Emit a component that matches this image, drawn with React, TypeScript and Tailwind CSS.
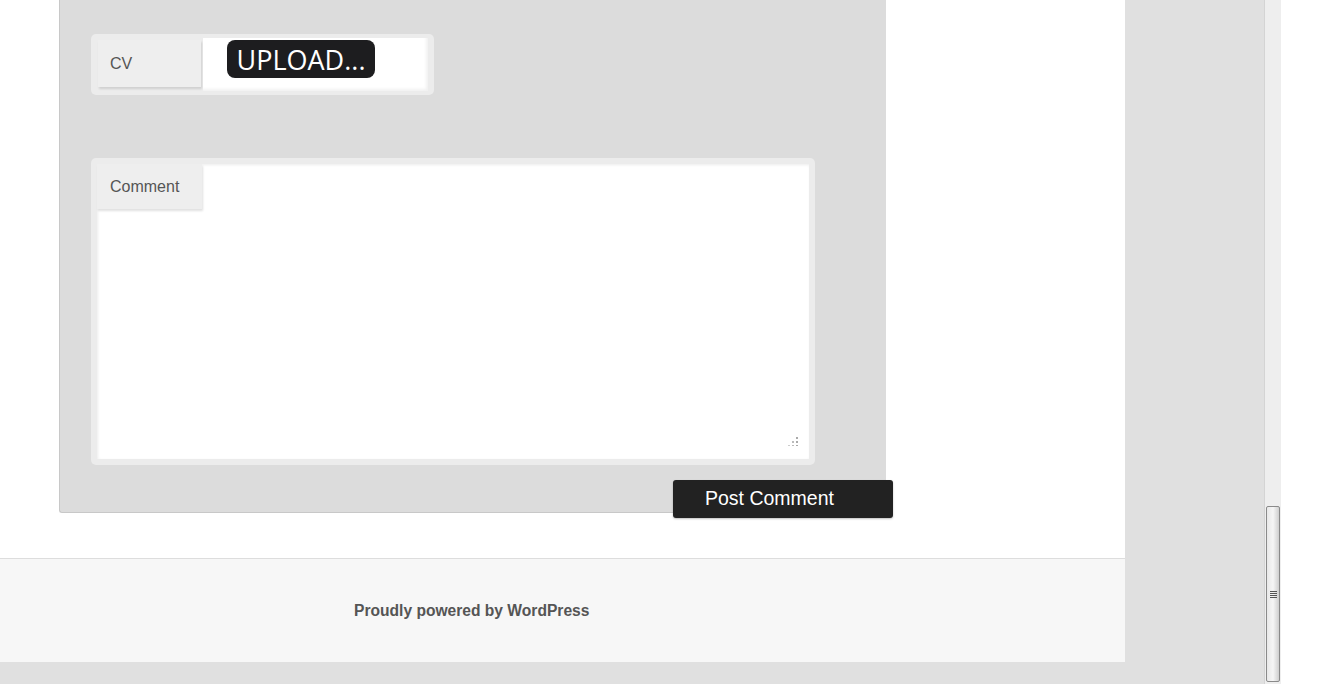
import React from "react";

// field label tab that sits over the input, like the theme's contact form
function FieldLabel({ text, className }: { text: string; className?: string }) {
  return (
    <div
      className={`flex items-center bg-[#eeeeee] pl-[12px] text-[16px] text-[#555555] shadow-[1px_2px_2px_rgba(0,0,0,0.12)] ${className ?? ""}`}
    >
      {text}
    </div>
  );
}

function Scrollbar() {
  return (
    <div className="flex h-[684px] w-[17px] flex-col border-l border-[#d4d4d4] bg-[#eeeeee]">
      <div className="h-[506px]" />
      <div className="mx-[1px] flex h-[176px] w-[14px] items-center justify-center rounded-[2px] border border-[#8a8a8a] bg-gradient-to-r from-[#e8e8e8] via-[#f6f6f6] to-[#cfcfcf]">
        <div className="flex flex-col gap-[1px]">
          <div className="h-[1px] w-[7px] bg-[#555]" />
          <div className="h-[1px] w-[7px] bg-[#555]" />
          <div className="h-[1px] w-[7px] bg-[#555]" />
          <div className="h-[1px] w-[7px] bg-[#555]" />
        </div>
      </div>
    </div>
  );
}

export default function App() {
  return (
    <div
      className="flex h-[684px] w-[1323px] overflow-hidden bg-[#e0e0e0]"
      style={{ fontFamily: '"Liberation Sans", Arial, sans-serif' }}
    >
      {/* page column */}
      <div className="flex w-[1125px] flex-col">
        <div className="h-[558px] bg-white">
          {/* comment form panel */}
          <div className="ml-[59px] h-[513px] w-[827px] rounded-bl-[3px] border-b border-l border-[#c8c8c8] bg-[#dcdcdc] pl-[31px] pt-[34px]">
            {/* CV upload */}
            <div className="flex h-[61px] w-[343px] rounded-[5px] bg-[#ececec] pl-[7px] pt-[4px]">
              <FieldLabel text="CV" className="mt-[2px] h-[47px] w-[103px]" />
              <div className="ml-[2px] h-[53px] w-[225px] bg-white pl-[24px] pt-[2px] shadow-[inset_-2px_-2px_3px_rgba(0,0,0,0.06)]">
                <button
                  className="flex h-[38px] w-[148px] items-center justify-center rounded-[8px] bg-[#1d1d1f] text-[27px] leading-none text-white"
                  style={{ fontFamily: '"Open Sans", sans-serif' }}
                >
                  UPLOAD...
                </button>
              </div>
            </div>

            {/* comment textarea */}
            <div className="mt-[63px] h-[307px] w-[724px] rounded-[5px] bg-[#ececec] p-[6px]">
              <div className="relative h-[295px] w-[712px] bg-white shadow-[inset_1px_1px_3px_rgba(0,0,0,0.08)]">
                <FieldLabel text="Comment" className="h-[45px] w-[105px] pl-[13px]" />
                <div className="absolute bottom-[13px] right-[11px] flex flex-col items-end gap-[2px]">
                  <div className="h-[2px] w-[2px] bg-[#aaa]" />
                  <div className="flex gap-[2px]">
                    <div className="h-[2px] w-[2px] bg-[#bbb]" />
                    <div className="h-[2px] w-[2px] bg-[#aaa]" />
                  </div>
                  <div className="flex gap-[2px]">
                    <div className="h-[1px] w-[2px] bg-[#ccc]" />
                    <div className="h-[1px] w-[2px] bg-[#bbb]" />
                    <div className="h-[1px] w-[2px] bg-[#aaa]" />
                  </div>
                </div>
              </div>
            </div>

            {/* submit */}
            <button className="ml-[582px] mt-[15px] flex h-[38px] w-[220px] items-center rounded-[3px] bg-[#222222] pl-[32px] text-[19.5px] text-white shadow-[0_1px_2px_rgba(0,0,0,0.25)]">
              Post Comment
            </button>
          </div>
        </div>

        {/* footer */}
        <footer className="flex h-[104px] items-center border-t border-[#dddddd] bg-[#f7f7f7] pl-[354px]">
          <span className="text-[15.6px] font-bold text-[#555555]">
            Proudly powered by WordPress
          </span>
        </footer>
      </div>

      <div className="w-[139px]" />
      <Scrollbar />
      <div className="flex-1 bg-white" />
    </div>
  );
}
